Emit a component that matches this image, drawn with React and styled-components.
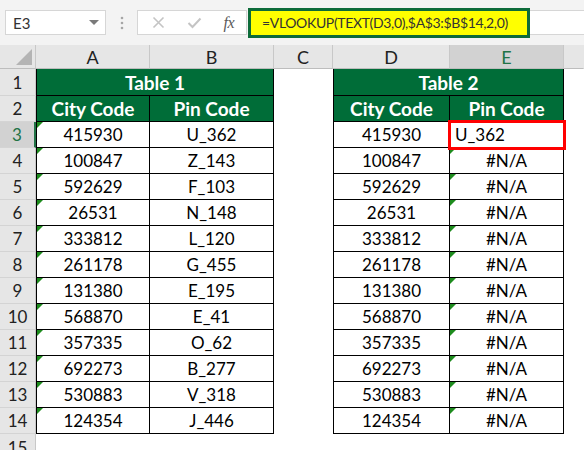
import React from "react";
import styled, { createGlobalStyle } from "styled-components";

const GlobalStyle = createGlobalStyle`
  html, body {
    margin: 0;
    padding: 0;
    background: #ffffff;
    font-family: "Lato", "Liberation Sans", sans-serif;
  }
`;

const tableOne = [
  ["415930", "U_362"],
  ["100847", "Z_143"],
  ["592629", "F_103"],
  ["26531", "N_148"],
  ["333812", "L_120"],
  ["261178", "G_455"],
  ["131380", "E_195"],
  ["568870", "E_41"],
  ["357335", "O_62"],
  ["692273", "B_277"],
  ["530883", "V_318"],
  ["124354", "J_446"],
];

const columns = ["A", "B", "C", "D", "E"];

const App = () => {
  return (
    <Page>
      <GlobalStyle />
      <FormulaBar>
        <NameBox>
          <span>E3</span>
          <Caret />
        </NameBox>
        <Grip>
          <svg width="4" height="14" viewBox="0 0 4 14">
            <circle cx="2" cy="2" r="1.3" fill="#a6a6a6" />
            <circle cx="2" cy="7" r="1.3" fill="#a6a6a6" />
            <circle cx="2" cy="12" r="1.3" fill="#a6a6a6" />
          </svg>
        </Grip>
        <FxBox>
          <svg width="13" height="13" viewBox="0 0 13 13">
            <path d="M1.5 1.5 L11.5 11.5 M11.5 1.5 L1.5 11.5" stroke="#c4c4c4" strokeWidth="1.6" fill="none" />
          </svg>
          <svg width="15" height="12" viewBox="0 0 15 12">
            <path d="M1.5 6 L5.5 10 L13.5 1.5" stroke="#c4c4c4" strokeWidth="2" fill="none" />
          </svg>
          <FxLabel>fx</FxLabel>
        </FxBox>
        <FormulaInput>
          <Highlight>=VLOOKUP(TEXT(D3,0),$A$3:$B$14,2,0)</Highlight>
        </FormulaInput>
      </FormulaBar>

      <Sheet>
        <Corner />
        {columns.map((c) => (
          <ColHeader key={c} $active={c === "E"}>
            {c}
          </ColHeader>
        ))}
        <ColHeader $last />

        <RowHeader>1</RowHeader>
        <Title $span={2} $left>Table 1</Title>
        <Blank />
        <Title $span={2} $left>Table 2</Title>
        <Blank />

        <RowHeader>2</RowHeader>
        <Head $left>City Code</Head>
        <Head>Pin Code</Head>
        <Blank />
        <Head $left>City Code</Head>
        <Head>Pin Code</Head>
        <Blank />

        {tableOne.map(([city, pin], i) => {
          const row = i + 3;
          const first = i === 0;
          return (
            <React.Fragment key={row}>
              <RowHeader $active={first}>{row}</RowHeader>
              <Cell $left $flag>{city}</Cell>
              <Cell>{pin}</Cell>
              <Blank />
              <Cell $left>{city}</Cell>
              {first ? (
                <Cell $align="left" $marked>
                  U_362
                </Cell>
              ) : (
                <Cell $flag>#N/A</Cell>
              )}
              <Blank />
            </React.Fragment>
          );
        })}

        <RowHeader $cut>15</RowHeader>
        <Blank />
        <Blank />
        <Blank />
        <Blank />
        <Blank />
        <Blank />
      </Sheet>
    </Page>
  );
};

// formula bar
const Page = styled.div`
  width: 584px;
  height: 450px;
  overflow: hidden;
  background: #ffffff;
`;

const FormulaBar = styled.div`
  display: flex;
  align-items: center;
  height: 45px;
  padding-left: 5px;
  background: #f3f3f3;
  box-sizing: border-box;
`;

const NameBox = styled.div`
  display: flex;
  align-items: center;
  justify-content: space-between;
  width: 101px;
  height: 25px;
  padding: 0 6px 0 7px;
  box-sizing: border-box;
  background: #ffffff;
  border: 1px solid #d6d6d6;
  font-size: 15px;
  color: #333333;
`;

const Caret = styled.span`
  width: 0;
  height: 0;
  border-left: 5px solid transparent;
  border-right: 5px solid transparent;
  border-top: 5px solid #7a7a7a;
`;

const Grip = styled.div`
  display: flex;
  width: 31px;
  justify-content: center;
`;

const FxBox = styled.div`
  display: flex;
  align-items: center;
  justify-content: space-between;
  width: 110px;
  height: 25px;
  padding: 0 12px 0 14px;
  box-sizing: border-box;
  background: #ffffff;
  border: 1px solid #d6d6d6;
`;

const FxLabel = styled.span`
  font-family: "Liberation Serif", "DejaVu Serif", serif;
  font-style: italic;
  font-size: 16px;
  color: #5a5a5a;
  letter-spacing: -0.5px;
`;

const FormulaInput = styled.div`
  display: flex;
  align-items: center;
  flex: 1;
  height: 25px;
  margin-left: 1px;
  background: #ffffff;
  border-top: 1px solid #d6d6d6;
  border-bottom: 1px solid #d6d6d6;
  box-sizing: border-box;
`;

const Highlight = styled.div`
  display: flex;
  align-items: center;
  height: 30px;
  padding: 0 19px 0 11px;
  box-sizing: border-box;
  background: #ffff00;
  border: 3px solid #0d6b3a;
  font-size: 14px;
  letter-spacing: -0.35px;
  color: #333333;
  white-space: nowrap;
`;

// sheet grid
const Sheet = styled.div`
  display: grid;
  grid-template-columns: 36px 114px 124px 59px 117px 114px 1fr;
  grid-template-rows: 24px 27px repeat(12, 26px) 26px;
  font-size: 17px;
  color: #000000;
`;

const Corner = styled.div`
  position: relative;
  background: #e6e6e6;
  border-right: 1px solid #c8c8c8;
  border-bottom: 1px solid #bdbdbd;
  box-sizing: border-box;
  &::after {
    content: "";
    position: absolute;
    right: 3px;
    bottom: 3px;
    width: 0;
    height: 0;
    border-left: 16px solid transparent;
    border-bottom: 16px solid #b4b4b4;
  }
`;

const ColHeader = styled.div`
  display: flex;
  align-items: center;
  justify-content: center;
  background: ${(p) => (p.$active ? "#d2d2d2" : "#e6e6e6")};
  color: ${(p) => (p.$active ? "#217346" : "#222222")};
  border-right: 1px solid ${(p) => (p.$last ? "transparent" : "#c8c8c8")};
  border-bottom: 1px solid #bdbdbd;
  box-sizing: border-box;
  font-size: 18px;
`;

const RowHeader = styled.div`
  display: flex;
  align-items: ${(p) => (p.$cut ? "flex-start" : "center")};
  justify-content: center;
  padding-top: ${(p) => (p.$cut ? "3px" : "0")};
  background: ${(p) => (p.$active ? "#d2d2d2" : "#e6e6e6")};
  color: ${(p) => (p.$active ? "#217346" : "#222222")};
  border-right: ${(p) => (p.$active ? "2px solid #217346" : "1px solid #c8c8c8")};
  border-bottom: 1px solid #d4d4d4;
  box-sizing: border-box;
  font-size: 17px;
`;

const Blank = styled.div`
  background: #ffffff;
`;

const Title = styled.div`
  grid-column: span ${(p) => p.$span};
  display: flex;
  align-items: center;
  justify-content: center;
  background: #006d38;
  color: #ffffff;
  font-weight: 700;
  font-size: 19px;
  border-left: ${(p) => (p.$left ? "1px solid #000" : "none")};
  border-right: 1px solid #000000;
  border-bottom: 1px solid #000000;
  box-sizing: border-box;
`;

const Head = styled(Title)`
  grid-column: auto;
`;

const Cell = styled.div`
  position: relative;
  display: flex;
  align-items: center;
  justify-content: ${(p) => (p.$align === "left" ? "flex-start" : "center")};
  padding-left: ${(p) => (p.$align === "left" ? "5px" : "0")};
  background: #ffffff;
  border-left: ${(p) => (p.$left ? "1px solid #000" : "none")};
  border-right: 1px solid #000000;
  border-bottom: 1px solid #000000;
  box-sizing: border-box;
  outline: ${(p) => (p.$marked ? "3px solid #ff0000" : "none")};
  outline-offset: -1px;
  z-index: ${(p) => (p.$marked ? 1 : "auto")};
  &::before {
    content: "";
    display: ${(p) => (p.$flag ? "block" : "none")};
    position: absolute;
    top: 0;
    left: 0;
    width: 0;
    height: 0;
    border-top: 6px solid #1e8c1e;
    border-right: 6px solid transparent;
  }
`;

export default App;
